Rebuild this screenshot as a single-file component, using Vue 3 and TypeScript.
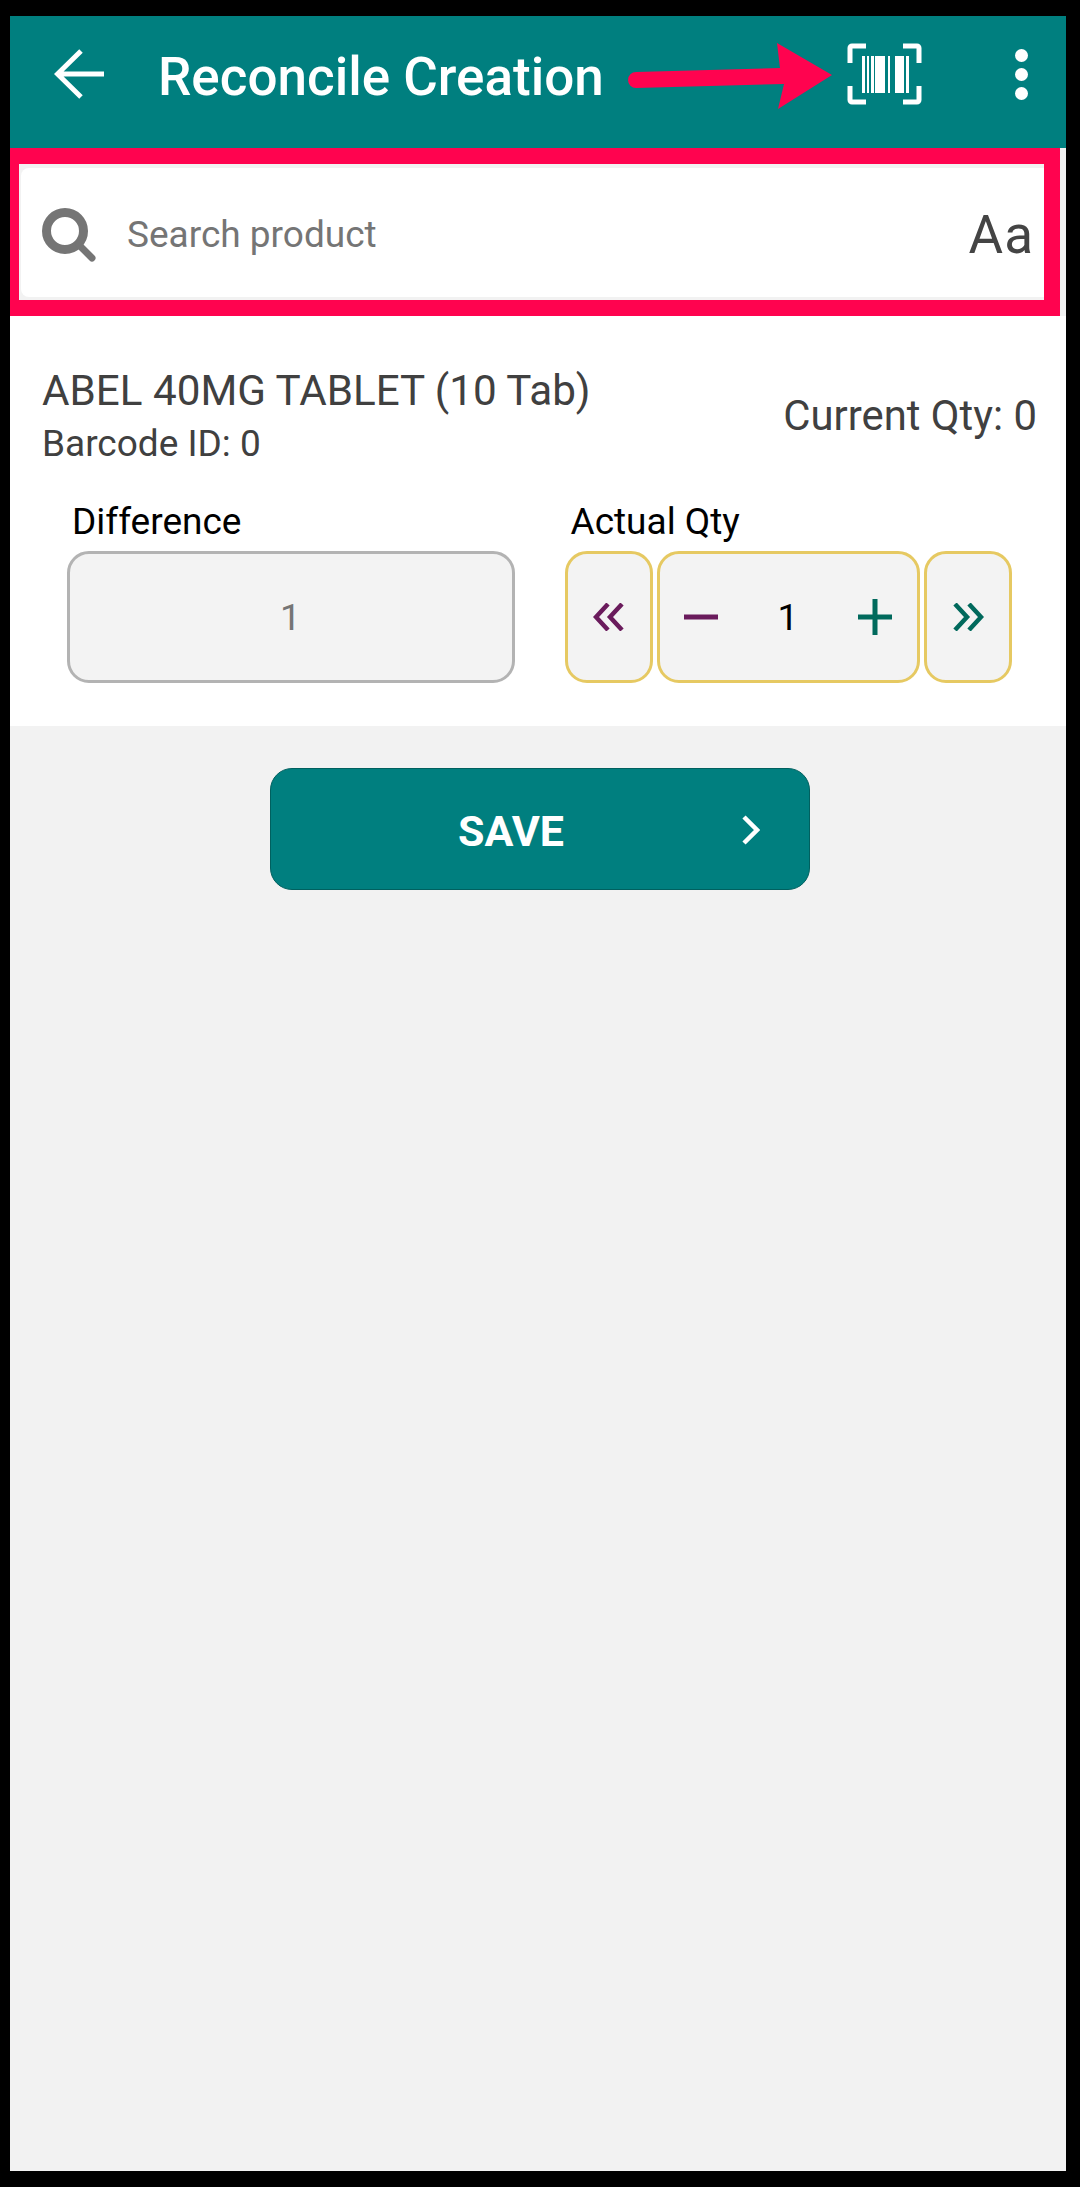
<script setup lang="ts">
const title: string = 'Reconcile Creation'
const bars: Array<[number, number]> = [
  [15, 3], [20, 2], [24, 3], [28, 10], [41, 2], [48, 9], [59, 3]
]
</script>

<template>
  <div class="frame">
    <div class="screen">
      <header class="appbar">
        <svg class="back" viewBox="0 0 50 50" width="50" height="50" aria-hidden="true">
          <path d="M50 25H4M27 2 3.5 25 27 48" fill="none" stroke="#fff" stroke-width="5" />
        </svg>
        <h1 class="title">{{ title }}</h1>
        <svg class="barcode" viewBox="0 0 75 62" width="75" height="62" aria-hidden="true">
          <path d="M19 3H5a2 2 0 0 0-2 2v15M56 3h14a2 2 0 0 1 2 2v15M19 59H5a2 2 0 0 1-2-2V43M56 59h14a2 2 0 0 0 2-2V43"
            fill="none" stroke="#fff" stroke-width="5" />
          <rect v-for="(b, i) in bars" :key="i" :x="b[0]" y="13" :width="b[1]" height="37" fill="#fff" />
        </svg>
        <div class="dots"><i></i><i></i><i></i></div>
      </header>

      <section class="search-wrap">
        <div class="search-card">
          <svg class="search-icon" viewBox="0 0 54 54" width="54" height="54" aria-hidden="true">
            <circle cx="23" cy="23" r="18.5" fill="none" stroke="#757575" stroke-width="9" />
            <path d="M37 37 50 50" fill="none" stroke="#757575" stroke-width="7" stroke-linecap="round" />
          </svg>
          <span class="placeholder">Search product</span>
          <span class="case">Aa</span>
        </div>
      </section>

      <section class="panel">
        <div class="product">
          <div>
            <div class="name">ABEL 40MG TABLET (10 Tab)</div>
            <div class="code">Barcode ID: 0</div>
          </div>
          <div class="current">Current Qty: 0</div>
        </div>
        <div class="fields">
          <div class="field">
            <label class="label">Difference</label>
            <div class="box diff">1</div>
          </div>
          <div class="field">
            <label class="label">Actual Qty</label>
            <div class="stepper">
              <div class="box step side">
                <svg viewBox="0 0 32 28" width="32" height="28" aria-hidden="true">
                  <path d="M15 1 3 14l12 13M29 1 17 14l12 13" fill="none" stroke="#6a1b5c" stroke-width="4.5" />
                </svg>
              </div>
              <div class="box step middle">
                <svg viewBox="0 0 34 36" width="34" height="36" aria-hidden="true">
                  <path d="M0 18H34" stroke="#6a1b5c" stroke-width="5" />
                </svg>
                <span class="qty">1</span>
                <svg viewBox="0 0 34 36" width="34" height="36" aria-hidden="true">
                  <path d="M0 18H34M17 0V36" stroke="#00695c" stroke-width="5" />
                </svg>
              </div>
              <div class="box step side">
                <svg viewBox="0 0 32 28" width="32" height="28" aria-hidden="true">
                  <path d="M3 1l12 13L3 27M17 1l12 13-12 13" fill="none" stroke="#00695c" stroke-width="4.5" />
                </svg>
              </div>
            </div>
          </div>
        </div>
      </section>

      <div class="actions">
        <button class="save" type="button">
          <span>SAVE</span>
          <svg class="chev" viewBox="0 0 18 30" width="18" height="30" aria-hidden="true">
            <path d="M2 2 15 15 2 28" fill="none" stroke="#fff" stroke-width="4.5" />
          </svg>
        </button>
      </div>

      <svg class="pointer" viewBox="0 0 204 70" width="204" height="70" aria-hidden="true">
        <path d="M8 29 152 25 149 0 204 32 150 66 156 41 8 45a8 8 0 0 1 0-16Z" fill="#ff034f" />
      </svg>
    </div>
  </div>
</template>

<style scoped>
.frame {
  width: 1080px;
  height: 2187px;
  box-sizing: border-box;
  padding: 16px 14px 16px 10px;
  background: #000;
}
.screen {
  position: relative;
  height: 100%;
  display: flex;
  flex-direction: column;
  background: #f2f2f2;
  font-family: Roboto, "Liberation Sans", sans-serif;
}
.appbar {
  height: 132px;
  box-sizing: border-box;
  padding: 0 0 16px 44px;
  display: flex;
  align-items: center;
  background: #007f7f;
  color: #fff;
}
.back { flex: none; }
.title {
  margin: 5px 0 0 54px;
  font-size: 53px;
  font-weight: 500;
  line-height: 56px;
  flex: 1;
}
.barcode { flex: none; }
.dots {
  flex: none;
  margin: 0 38px 0 93px;
  display: flex;
  flex-direction: column;
  gap: 6px;
}
.dots i {
  display: block;
  width: 13px;
  height: 13px;
  border-radius: 50%;
  background: #fff;
}
.search-wrap {
  height: 168px;
  box-sizing: border-box;
  margin-right: 6px;
  padding: 4px 0 3px 2px;
  border: solid #ff034f;
  border-width: 16px 16px 16px 9px;
  background: #f2f2f2;
}
.search-card {
  height: 100%;
  box-sizing: border-box;
  padding: 4px 10px 0 21px;
  display: flex;
  align-items: center;
  background: #fff;
  border-radius: 8px 0 0 8px;
}
.search-icon { flex: none; }
.placeholder {
  margin-left: 31px;
  flex: 1;
  font-size: 37px;
  color: #757575;
}
.case {
  font-size: 53px;
  line-height: 60px;
  color: #444;
  letter-spacing: 1px;
}
.panel {
  height: 410px;
  box-sizing: border-box;
  padding: 51px 29px 0 32px;
  background: #fff;
}
.product {
  display: flex;
  justify-content: space-between;
  align-items: center;
  color: #404040;
}
.name {
  font-size: 42.2px;
  line-height: 48px;
}
.code {
  margin-top: 8px;
  font-size: 37px;
  line-height: 42px;
}
.current {
  font-size: 41.8px;
  line-height: 48px;
}
.fields {
  margin: 36px 0 0 24.5px;
  display: flex;
  gap: 50.5px;
}
.field { flex: none; }
.label {
  display: block;
  margin: 0 0 8px 5.5px;
  font-size: 37px;
  line-height: 42px;
  color: #000;
}
.box {
  height: 132px;
  box-sizing: border-box;
  border: 3px solid #b3b3b3;
  border-radius: 22px;
  background: #f3f3f3;
  display: flex;
  align-items: center;
  justify-content: center;
}
.diff {
  width: 448px;
  font-size: 37px;
  color: #757575;
}
.stepper {
  display: flex;
  gap: 4px;
}
.step { border-color: #e6c962; }
.side { width: 88px; }
.middle {
  width: 263px;
  justify-content: space-between;
  padding: 0 25px 0 24px;
}
.qty {
  font-size: 37px;
  color: #000;
}
.actions {
  padding: 42px 0 0 4px;
  display: flex;
  justify-content: center;
}
.save {
  position: relative;
  width: 540px;
  height: 122px;
  padding: 0;
  border: 1px solid #00605f;
  border-radius: 22px;
  background: #007f7f;
  color: #fff;
  font-family: inherit;
  font-size: 43px;
  font-weight: 700;
  display: flex;
  align-items: center;
  justify-content: center;
}
.save span { margin: 3px 58px 0 0; }
.chev {
  position: absolute;
  right: 49px;
  top: 46px;
}
.pointer {
  position: absolute;
  left: 618px;
  top: 27px;
}
</style>
<style>
html, body { background: #000; }
</style>
